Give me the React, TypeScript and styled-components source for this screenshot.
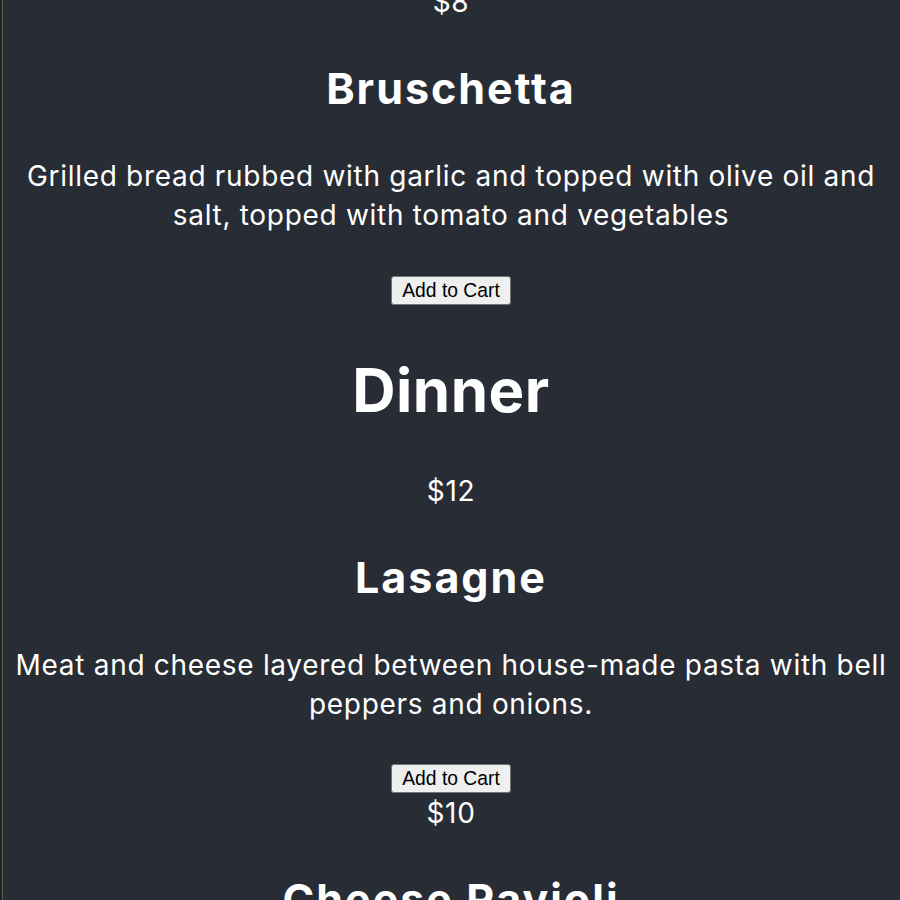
import React from "react";
import styled, { createGlobalStyle } from "styled-components";

const GlobalStyle = createGlobalStyle`
  html, body {
    margin: 0;
    padding: 0;
    background: #282c34;
  }
  body {
    font-family: Inter, "Noto Sans", sans-serif;
    -webkit-font-smoothing: antialiased;
  }
`;

const Viewport = styled.div`
  height: 900px;
  overflow: hidden;
  background: #282c34;
  border-left: 2px solid #1f2620;
  box-shadow: inset 1px 0 0 #585b60;
`;

const Menu = styled.main`
  display: flex;
  flex-direction: column;
  align-items: center;
  text-align: center;
  color: #ffffff;
  font-size: 28px;
  letter-spacing: 0.7px;
  padding: 0 6px;
  margin-top: -17px;
`;

const Category = styled.h1`
  font-size: 60px;
  font-weight: 700;
  letter-spacing: 0.5px;
  margin: 49px 0 46px;
  line-height: 72px;
`;

const Price = styled.p<{ $afterButton?: boolean }>`
  margin: ${(p) => (p.$afterButton ? "1px 0 0" : "0")};
  line-height: 39px;
`;

const Name = styled.h2`
  font-size: 43px;
  font-weight: 700;
  letter-spacing: 2px;
  margin: 41px 0 42.5px;
  line-height: 51.6px;
`;

const Description = styled.p`
  margin: 0 0 40.5px;
  line-height: 39px;
`;

const CartButton = styled.button`
  font-family: "Liberation Sans", Arial, sans-serif;
  font-size: 19.3px;
  letter-spacing: 0;
  color: #000;
  background: #efefef;
  border: 1px solid #767676;
  border-radius: 3px;
  padding: 3px 10px;
  line-height: 21px;
  cursor: pointer;
`;

type Item = { price: string; name: string; desc: string };

const MenuItem: React.FC<Item> = ({ price, name, desc }) => (
  <>
    <Price>{price}</Price>
    <Name>{name}</Name>
    <Description>{desc}</Description>
    <CartButton>Add to Cart</CartButton>
  </>
);

export default function App() {
  return (
    <>
      <GlobalStyle />
      <Viewport>
        <Menu>
          <MenuItem
            price="$8"
            name="Bruschetta"
            desc="Grilled bread rubbed with garlic and topped with olive oil and salt, topped with tomato and vegetables"
          />
          <Category>Dinner</Category>
          <MenuItem
            price="$12"
            name="Lasagne"
            desc="Meat and cheese layered between house-made pasta with bell peppers and onions."
          />
          <Price $afterButton>$10</Price>
          <Name>Cheese Ravioli</Name>
        </Menu>
      </Viewport>
    </>
  );
}
